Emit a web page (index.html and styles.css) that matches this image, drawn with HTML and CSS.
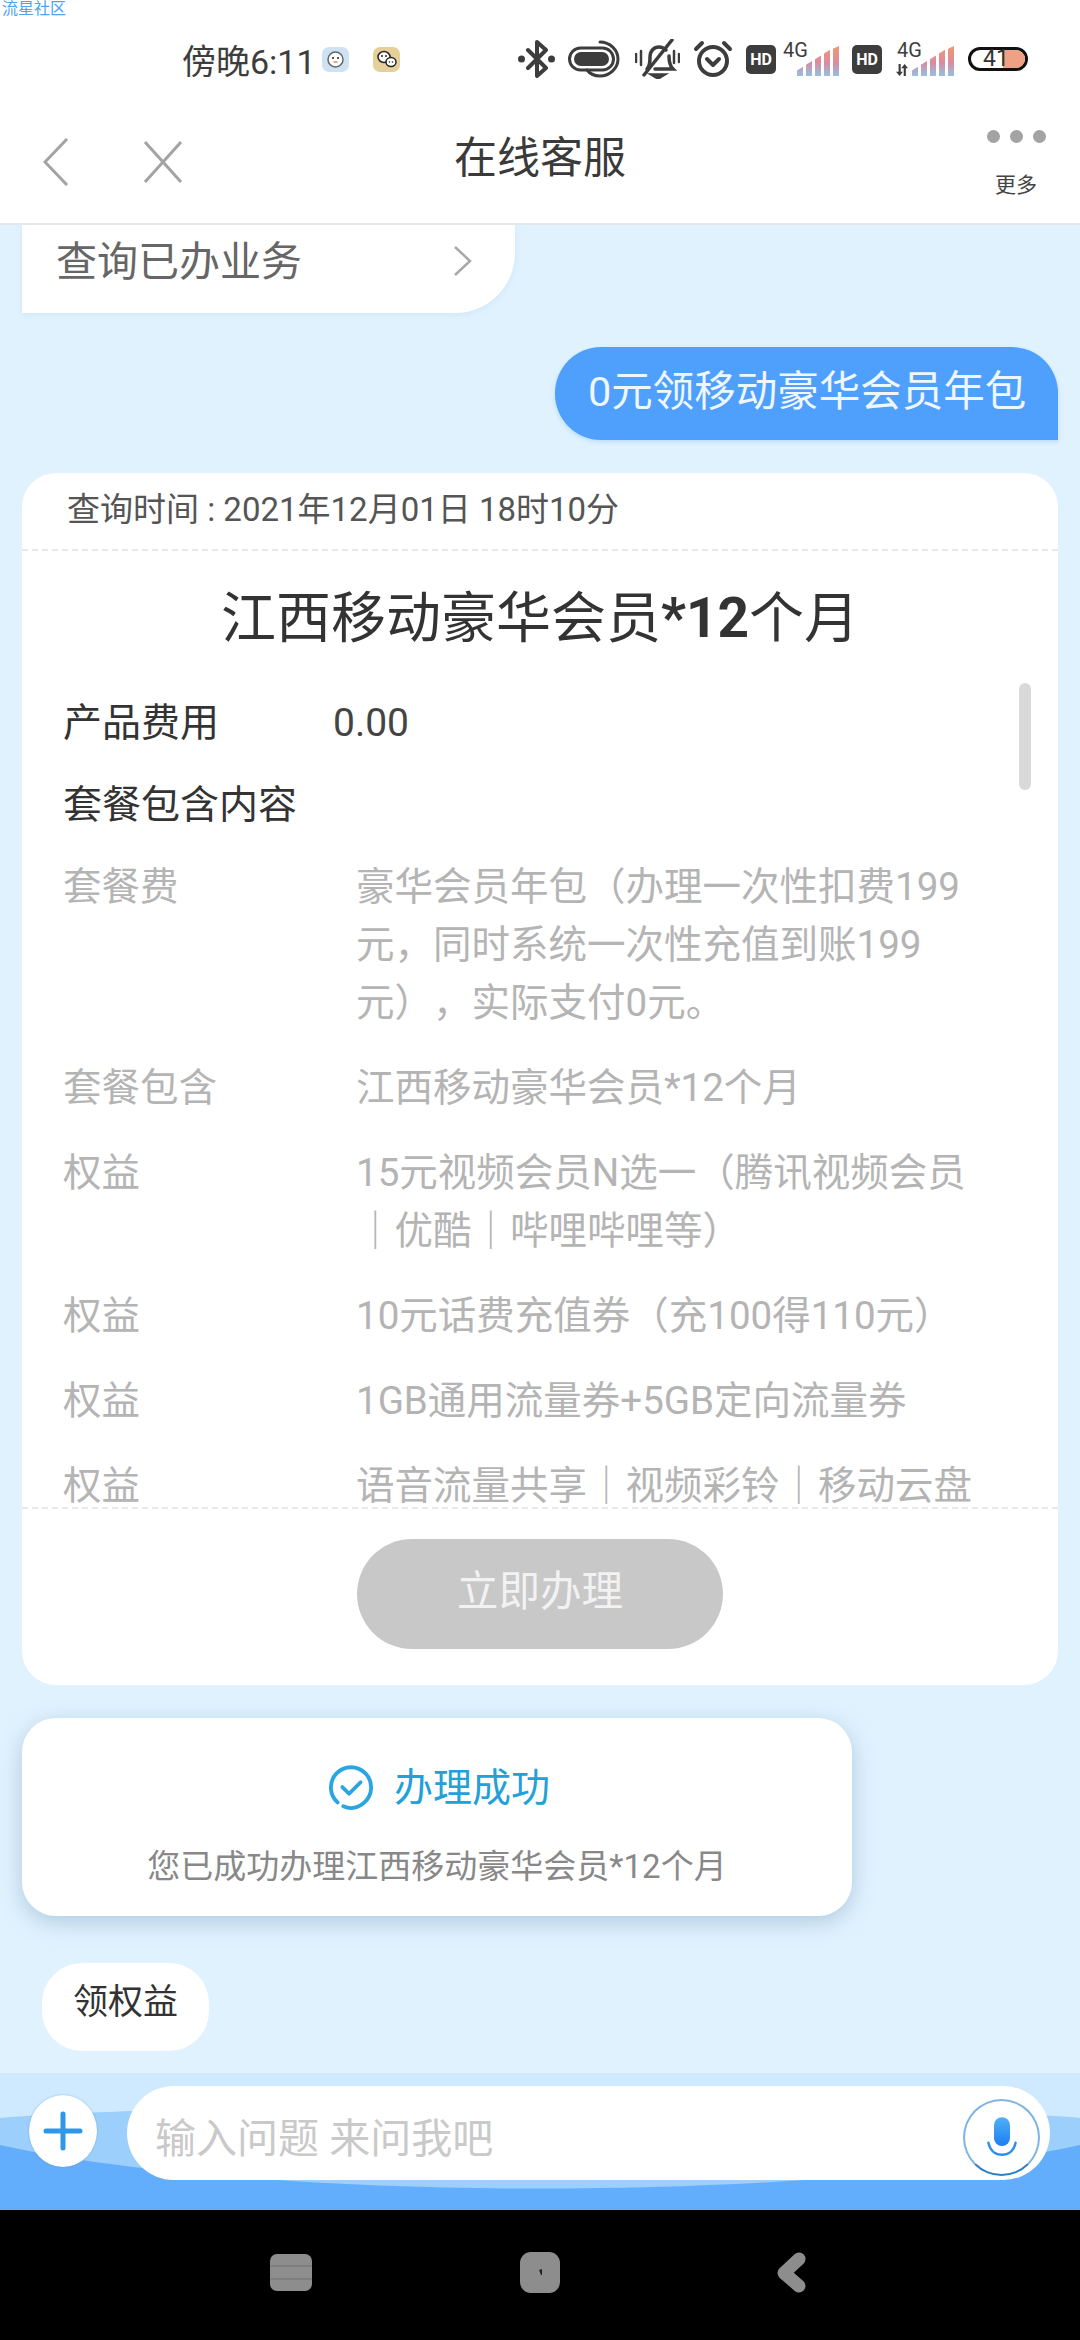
FILE: index.html
```html
<!DOCTYPE html>
<html>
<head>
    <meta charset="utf-8">
    <title>在线客服</title>
    <link rel="stylesheet" href="styles.css">
</head>
<body>
    <div class="watermark">流星社区</div>

    <!-- status bar -->
    <div class="statusbar">
        <span class="clock">傍晚6:11</span>
        <svg class="app-icon app-one" viewBox="0 0 27 25"><rect width="27" height="25" rx="7" fill="#cfe2f3"/><circle cx="13.500" cy="12.500" r="7.500" fill="#fff" stroke="#666" stroke-width="1.500"/><circle cx="11" cy="11" r="1" fill="#222"/><circle cx="16" cy="11" r="1" fill="#222"/><path d="M11.500 15h4" stroke="#e08a5a" stroke-width="1.500"/></svg>
        <svg class="app-icon app-two" viewBox="0 0 27 25"><rect width="27" height="25" rx="7" fill="#e5d09a"/><ellipse cx="11" cy="10" rx="6" ry="5.500" fill="#fff" stroke="#222" stroke-width="1.500"/><ellipse cx="18" cy="15" rx="5" ry="4.500" fill="#fff" stroke="#222" stroke-width="1.500"/><circle cx="9" cy="9" r="1" fill="#222"/><circle cx="13" cy="9" r="1" fill="#222"/><circle cx="16.500" cy="15" r=".8" fill="#222"/><circle cx="19.500" cy="15" r=".8" fill="#222"/></svg>

        <svg class="st-bt" viewBox="0 0 37 38" fill="none" stroke="#3d3d3d" stroke-width="4" stroke-linecap="round" stroke-linejoin="round"><path d="M10 10l18 18-9 8V2l9 8L10 28"/><circle cx="3.500" cy="19" r="1.500" fill="#3d3d3d"/><circle cx="33.500" cy="19" r="1.500" fill="#3d3d3d"/></svg>
        <svg class="st-link" viewBox="0 0 52 38" fill="none" stroke="#3d3d3d" stroke-width="3" stroke-linecap="round"><rect x="1.500" y="8" width="44" height="22" rx="11"/><rect x="6" y="12" width="35" height="14" rx="7" fill="#3d3d3d" stroke="none"/><path d="M32 2c10 0 18 8 18 17s-8 17-18 17c-6 0-10-2-13-6"/></svg>
        <svg class="st-bell" viewBox="0 0 45 40" fill="none" stroke="#3d3d3d" stroke-width="3.500" stroke-linecap="round"><path d="M12 30c3-3 3-7 3-12 0-6 4-10 9-10 3 0 5 1 7 3M34 17c0 6 1 10 4 13H20"/><path d="M37 1L9 36"/><path d="M18 36h10l-5 3z" fill="#3d3d3d"/><path d="M1 15v8M6 12v14M44 15v8M39 12v12" stroke-width="2.500"/></svg>
        <svg class="st-alarm" viewBox="0 0 40 38" fill="none" stroke="#3d3d3d" stroke-width="4" stroke-linecap="round" stroke-linejoin="round"><circle cx="20" cy="21" r="14"/><path d="M14 19l6 6 6-6M3 9l6-6M37 9l-6-6"/></svg>
        <span class="hd">HD</span>
        <span class="net">
            <span class="net-label">4G</span>
            <svg class="st-signal" viewBox="0 0 42 32" preserveAspectRatio="none"><defs><linearGradient id="sig" x1="0" y1="0" x2="0" y2="1"><stop offset="0" stop-color="#ee9a70"/><stop offset=".55" stop-color="#dd8a9f"/><stop offset="1" stop-color="#8fc2e6"/></linearGradient></defs><path fill="url(#sig)" d="M0 26l6-4v10H0zM9 20l6-4v16H9zM18 14l6-4v22h-6zM27 8l6-4v28h-6zM36 3l6-3v32h-6z"/></svg>
        </span>
        <span class="hd hd-two">HD</span>
        <span class="net net-two">
            <span class="net-label">4G</span>
            <svg class="st-arrows" viewBox="0 0 16 14"><path d="M4 0h2.500v9H9l-3.800 5L1 9h3zM10 14h2.500V5H15l-3.800-5L7 5h3z" fill="#3d3d3d"/></svg>
            <svg class="st-signal" viewBox="0 0 42 32" preserveAspectRatio="none"><path fill="url(#sig)" d="M0 26l6-4v10H0zM9 20l6-4v16H9zM18 14l6-4v22h-6zM27 8l6-4v28h-6zM36 3l6-3v32h-6z"/></svg>
        </span>
        <span class="battery"><span class="battery-fill"></span><span class="battery-num">41</span></span>
    </div>

    <!-- nav bar -->
    <div class="navbar">
        <div class="nav-left">
            <svg class="nav-back" viewBox="0 0 26 48" fill="none" stroke="#a3a3a3" stroke-width="3"><path d="M24 1L2 24l22 23"/></svg>
            <svg class="nav-close" viewBox="0 0 40 42" fill="none" stroke="#a3a3a3" stroke-width="3"><path d="M2 1l36 40M38 1L2 41"/></svg>
        </div>
        <div class="nav-title">在线客服</div>
        <div class="nav-right">
            <div class="dots"><i></i><i></i><i></i></div>
            <div class="more">更多</div>
        </div>
    </div>

    <!-- chat -->
    <div class="chat">
        <div class="menu-bubble">
            <span>查询已办业务</span>
            <svg class="menu-arrow" viewBox="0 0 20 32" fill="none" stroke="#a8a8a8" stroke-width="2.500"><path d="M2 2l15 14L2 30"/></svg>
        </div>

        <div class="user-bubble">0元领移动豪华会员年包</div>

        <div class="card">
            <div class="card-time">查询时间 : 2021年12月01日 18时10分</div>
            <div class="card-body">
                <div class="card-title">江西移动豪华会员<b>*12</b>个月</div>
                <div class="row-main"><span class="row-key">产品费用</span><span class="row-price">0.00</span></div>
                <div class="row-head">套餐包含内容</div>
                <div class="row"><span class="row-key">套餐费</span><span class="row-val">豪华会员年包（办理一次性扣费199元，同时系统一次性充值到账199元），实际支付0元。</span></div>
                <div class="row"><span class="row-key">套餐包含</span><span class="row-val">江西移动豪华会员*12个月</span></div>
                <div class="row"><span class="row-key">权益</span><span class="row-val">15元视频会员N选一（腾讯视频会员｜优酷｜哔哩哔哩等）</span></div>
                <div class="row"><span class="row-key">权益</span><span class="row-val">10元话费充值券（充100得110元）</span></div>
                <div class="row"><span class="row-key">权益</span><span class="row-val">1GB通用流量券+5GB定向流量券</span></div>
                <div class="row"><span class="row-key">权益</span><span class="row-val">语音流量共享｜视频彩铃｜移动云盘</span></div>
                <div class="scrollbar"></div>
            </div>
            <div class="card-foot"><div class="apply-btn">立即办理</div></div>
        </div>

        <div class="success">
            <div class="success-head">
                <svg class="success-icon" viewBox="0 0 48 48" fill="none" stroke="#2aa5e2" stroke-width="4" stroke-linecap="round" stroke-linejoin="round"><path d="M10 39A21 21 0 1 1 38 39 21 21 0 0 1 24 45c-3 0-6-1-8-2"/><path d="M15 23l7 7 12-12"/></svg>
                <span>办理成功</span>
            </div>
            <div class="success-text">您已成功办理江西移动豪华会员*12个月</div>
        </div>

        <div class="chip">领权益</div>
    </div>

    <!-- input -->
    <div class="inputbar">
        <svg class="waves" viewBox="0 0 1080 137" preserveAspectRatio="none"><path d="M0 45C200 28 880 28 1080 45V137H0z" fill="#9ccffc"/><path d="M0 72C260 130 820 130 1080 72V137H0z" fill="#63aefc"/></svg>
        <div class="plus-btn">
            <svg viewBox="0 0 40 40" fill="none" stroke="#2f97e8" stroke-width="5" stroke-linecap="round"><path d="M20 3v34M3 20h34"/></svg>
        </div>
        <div class="input-box">
            <span class="placeholder">输入问题 来问我吧</span>
            <div class="mic-btn">
                <svg viewBox="0 0 40 52"><defs><linearGradient id="mic" x1="0" y1="0" x2="0" y2="1"><stop offset="0" stop-color="#50b0f8"/><stop offset="1" stop-color="#1c7ff0"/></linearGradient></defs><rect x="10" y="0" width="20" height="36" rx="10" fill="url(#mic)"/><path d="M3 32c2 10 9 15 17 15s15-5 17-15" fill="none" stroke="#2b8ff0" stroke-width="3" stroke-linecap="round"/></svg>
            </div>
        </div>
    </div>

    <!-- android nav keys -->
    <div class="syskeys">
        <svg class="key key-menu" viewBox="0 0 42 37"><rect width="42" height="37" rx="7" fill="#8d8d8d"/><path d="M0 12h42M0 25h42" stroke="#7a7a7a" stroke-width="1.500"/></svg>
        <svg class="key key-home" viewBox="0 0 40 41"><rect width="40" height="41" rx="11" fill="#8d8d8d"/><path d="M19 18l3-1v6h-1z" fill="#222"/></svg>
        <svg class="key key-back" viewBox="0 0 31 41"><path d="M24 7L9 21l15 13" fill="none" stroke="#8d8d8d" stroke-width="13" stroke-linecap="round" stroke-linejoin="round"/></svg>
    </div>
</body>
</html>
```

FILE: styles.css
```css
* {
    box-sizing: border-box;
}

body {
    margin: 0;
    width: 1080px;
    height: 2340px;
    overflow: hidden;
    position: relative;
    display: flex;
    flex-direction: column;
    background-color: #e0f2fe;
    font-family: Roboto, "Noto Sans CJK SC", sans-serif;
    color: #333;
    text-spacing-trim: space-all;
}

.watermark {
    position: absolute;
    left: 2px;
    top: 0;
    font-size: 16px;
    line-height: 18px;
    color: #4da3ee;
}

/* status bar */
.statusbar {
    height: 100px;
    flex: none;
    background-color: #fff;
    display: flex;
    align-items: center;
    padding: 18px 0 0 182px;
    color: #3d3d3d;
}

.statusbar > * {
    flex: none;
}

.clock {
    font-size: 34px;
    width: 130px;
    white-space: nowrap;
}

.app-icon {
    width: 27px;
    height: 25px;
}

.app-one {
    margin-left: 10px;
}

.app-two {
    margin-left: 24px;
}

.st-bt {
    width: 37px;
    height: 38px;
    margin-left: 118px;
}

.st-link {
    width: 52px;
    height: 38px;
    margin-left: 13px;
}

.st-bell {
    width: 45px;
    height: 40px;
    margin-left: 15px;
}

.st-alarm {
    width: 40px;
    height: 38px;
    margin-left: 13px;
}

.hd {
    width: 30px;
    height: 29px;
    margin-left: 13px;
    border-radius: 5px;
    background-color: #3d3d3d;
    color: #fff;
    font-size: 16px;
    font-weight: 700;
    line-height: 29px;
    text-align: center;
}

.net {
    position: relative;
    width: 56px;
    height: 34px;
    margin-left: 7px;
}

.net-two {
    width: 60px;
    margin-left: 12px;
}

.net-label {
    position: absolute;
    left: 0;
    top: -4px;
    font-size: 20px;
    line-height: 24px;
}

.net-two .net-label {
    left: 3px;
}

.st-signal {
    position: absolute;
    right: 0;
    bottom: 0;
    width: 42px;
    height: 30px;
}

.st-arrows {
    position: absolute;
    left: 0;
    bottom: 0;
    width: 16px;
    height: 12px;
}

.battery {
    position: relative;
    width: 60px;
    height: 24px;
    margin-left: 14px;
    border: 3px solid #111;
    border-radius: 12px;
}

.battery-fill {
    position: absolute;
    right: 0;
    top: 0;
    bottom: 0;
    width: 22px;
    border-radius: 0 9px 9px 0;
    background-color: #f0a184;
}

.battery-num {
    position: absolute;
    left: 12px;
    top: -3px;
    font-size: 23px;
    line-height: 24px;
    color: #333;
}

/* nav bar */
.navbar {
    height: 125px;
    flex: none;
    background-color: #fff;
    border-bottom: 2px solid #e3e7ec;
    display: grid;
    grid-template-columns: 1fr auto 1fr;
    align-items: center;
}

.nav-left {
    display: flex;
    align-items: center;
    padding-left: 43px;
    gap: 74px;
}

.nav-back {
    width: 26px;
    height: 48px;
}

.nav-close {
    width: 40px;
    height: 42px;
}

.nav-title {
    font-size: 43px;
    line-height: 60px;
    margin-top: -8px;
    color: #3a3a3a;
}

.nav-right {
    justify-self: end;
    width: 60px;
    margin-right: 34px;
    padding-top: 6px;
    display: flex;
    flex-direction: column;
    align-items: center;
}

.dots {
    display: flex;
    gap: 10px;
    height: 14px;
}

.dots i {
    width: 13px;
    height: 13px;
    border-radius: 50%;
    background-color: #a3a3a3;
}

.more {
    font-size: 21px;
    line-height: 28px;
    margin-top: 27px;
    color: #444;
}

/* chat */
.chat {
    flex: 1;
    display: flex;
    flex-direction: column;
    padding: 0 22px;
    overflow: hidden;
}

.menu-bubble {
    width: 493px;
    height: 88px;
    flex: none;
    background-color: #fff;
    border-radius: 0 0 60px 0;
    box-shadow: 0 2px 6px rgba(120, 170, 210, .15);
    display: flex;
    align-items: flex-start;
    justify-content: space-between;
    padding: 8px 42px 0 34px;
    font-size: 41px;
    line-height: 58px;
    color: #666;
}

.menu-arrow {
    width: 20px;
    height: 32px;
    margin-top: 12px;
}

.user-bubble {
    align-self: flex-end;
    flex: none;
    width: 503px;
    height: 93px;
    margin-top: 34px;
    border-radius: 46px 46px 0 46px;
    background-color: #4f9ffc;
    box-shadow: 0 2px 4px rgba(100, 170, 240, .3);
    color: #eef6ff;
    font-size: 41.500px;
    line-height: 90px;
    padding-left: 33px;
    white-space: nowrap;
}

.card {
    flex: none;
    height: 1212px;
    margin-top: 33px;
    border-radius: 34px;
    background-color: #fff;
    display: flex;
    flex-direction: column;
}

.card-time {
    flex: none;
    height: 78px;
    border-bottom: 2px dashed #e6e8ea;
    padding-left: 45px;
    font-size: 33px;
    line-height: 74px;
    color: #555;
}

.card-body {
    position: relative;
    height: 958px;
    flex: none;
    border-bottom: 2px dashed #e6e8ea;
    padding: 0 41px;
}

.card-title {
    font-size: 55px;
    line-height: 70px;
    text-align: center;
    color: #333;
    margin-top: 32px;
    white-space: nowrap;
}

.card-title b {
    font-weight: 700;
}

.row-main {
    display: flex;
    margin-top: 41px;
    font-size: 39px;
    line-height: 58px;
    color: #333;
}

.row-main .row-key {
    width: 270px;
}

.row-price {
    font-size: 39px;
    color: #444;
}

.row-head {
    margin-top: 24px;
    font-size: 39px;
    line-height: 58px;
    color: #333;
}

.row {
    display: flex;
    margin-top: 27px;
    font-size: 38.500px;
    line-height: 58px;
    color: #b4b4b4;
}

.row-head + .row {
    margin-top: 24px;
}

.row-key {
    flex: none;
    width: 293px;
}

.row-val {
    width: 625px;
    flex: none;
}

.scrollbar {
    position: absolute;
    right: 27px;
    top: 132px;
    width: 12px;
    height: 107px;
    border-radius: 6px;
    background-color: #d9d9d9;
}

.card-foot {
    flex: 1;
    display: flex;
    justify-content: center;
    padding-top: 30px;
}

.apply-btn {
    width: 366px;
    height: 110px;
    border-radius: 55px;
    background-color: #c8c8c8;
    color: #f2f2f2;
    font-size: 41.500px;
    line-height: 106px;
    text-align: center;
}

.success {
    flex: none;
    width: 830px;
    height: 198px;
    margin-top: 33px;
    border-radius: 34px;
    background-color: #fff;
    box-shadow: 0 6px 22px rgba(90, 130, 165, .35);
    text-align: center;
}

.success-head {
    display: flex;
    justify-content: center;
    align-items: center;
    gap: 20px;
    padding-top: 42px;
    padding-left: 4px;
    font-size: 39px;
    line-height: 56px;
    color: #22a0d8;
}

.success-icon {
    width: 46px;
    height: 46px;
}

.success-text {
    margin-top: 27px;
    font-size: 33px;
    line-height: 48px;
    color: #888;
}

.chip {
    flex: none;
    align-self: flex-start;
    width: 167px;
    height: 88px;
    margin: 47px 0 0 20px;
    border-radius: 40px;
    background-color: #fff;
    text-align: center;
    font-size: 35px;
    line-height: 80px;
    color: #333;
}

/* input */
.inputbar {
    position: relative;
    height: 137px;
    flex: none;
    background-color: #cfeafe;
    display: flex;
    align-items: flex-start;
    padding: 13px 30px 0 29px;
    overflow: hidden;
}

.waves {
    position: absolute;
    left: 0;
    top: 0;
    width: 1080px;
    height: 137px;
}

.plus-btn {
    position: relative;
    flex: none;
    width: 68px;
    height: 72px;
    margin-top: 9px;
    border-radius: 50%;
    background-color: #fff;
    display: flex;
    align-items: center;
    justify-content: center;
    box-shadow: 0 0 2px rgba(70, 140, 200, .6);
}

.plus-btn svg {
    width: 40px;
    height: 40px;
}

.input-box {
    position: relative;
    flex: 1;
    height: 94px;
    margin-left: 30px;
    border-radius: 47px;
    background-color: #fff;
    display: flex;
    align-items: center;
    justify-content: space-between;
    padding: 0 10px 0 28px;
}

.placeholder {
    font-size: 41px;
    padding-top: 4px;
    color: #c9c9c9;
}

.mic-btn {
    width: 77px;
    height: 77px;
    margin-top: 9px;
    border-radius: 50%;
    border: 2px solid #7fb5e4;
    border-bottom-color: #2f7fc8;
    display: flex;
    align-items: center;
    justify-content: center;
}

.mic-btn svg {
    width: 32px;
    height: 44px;
}

/* android keys */
.syskeys {
    height: 130px;
    flex: none;
    background-color: #000;
    display: flex;
    align-items: center;
    padding: 0 0 6px 270px;
}

.key-menu {
    width: 42px;
    height: 37px;
}

.key-home {
    width: 40px;
    height: 41px;
    margin-left: 208px;
}

.key-back {
    width: 31px;
    height: 41px;
    margin-left: 215px;
}
```
